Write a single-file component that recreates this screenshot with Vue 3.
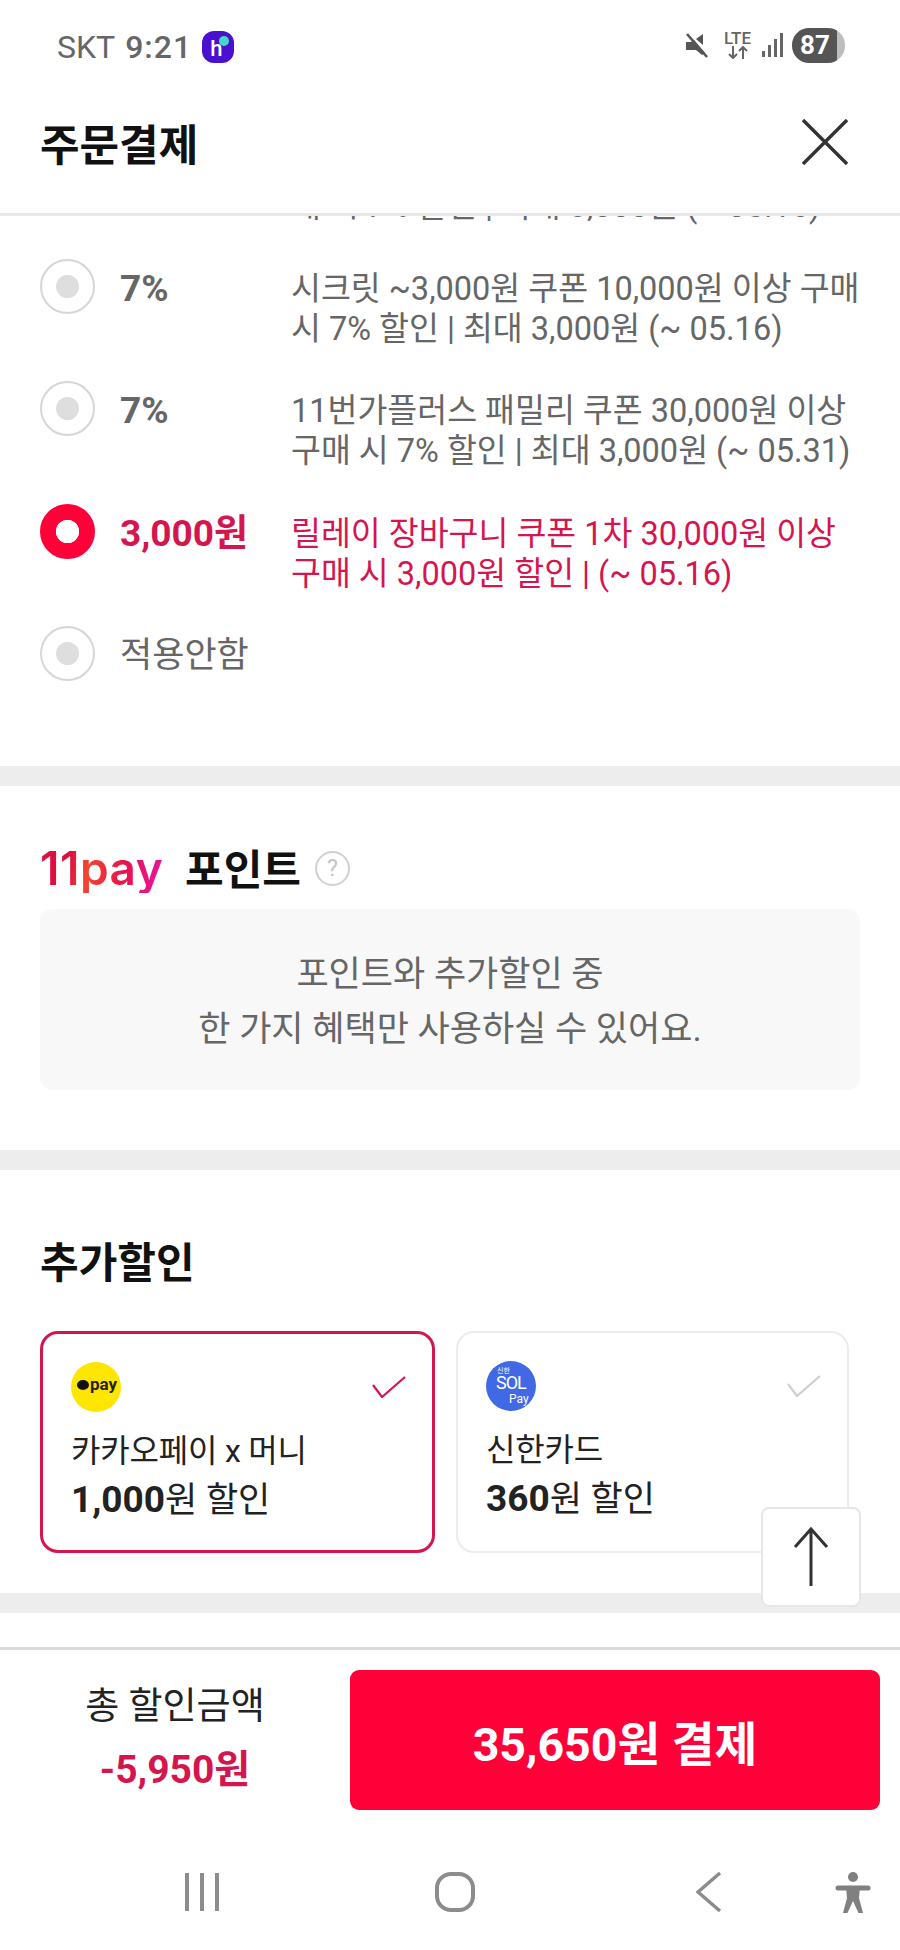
<script setup>
const coupons = [
  { id: 1, amount: '7%', desc: '시크릿 ~3,000원 쿠폰 10,000원 이상 구매 시 7% 할인 | 최대 3,000원 (~ 05.16)', strong: true },
  { id: 2, amount: '7%', desc: '11번가플러스 패밀리 쿠폰 30,000원 이상 구매 시 7% 할인 | 최대 3,000원 (~ 05.31)', strong: true },
  { id: 3, amount: '3,000원', desc: '릴레이 장바구니 쿠폰 1차 30,000원 이상 구매 시 3,000원 할인 | (~ 05.16)', strong: true, active: true },
  { id: 4, amount: '적용안함', desc: '', strong: false },
]
</script>

<template>
  <div class="screen">
    <div class="status">
      <div class="status-left">
        <span>SKT</span>
        <span class="time">9:21</span>
        <span class="happ"><span class="happ-h">h</span><span class="happ-dot"></span></span>
      </div>
      <div class="status-right">
        <svg class="ico-mute" viewBox="0 0 24 26" width="24" height="26">
          <path d="M1 10h5l3-2 11 13-3 2-6-5H1z" fill="#555" />
          <path d="M11 7l7-5v11z" fill="#555" />
          <path d="M2 2l20 23" stroke="#555" stroke-width="2.6" fill="none" />
        </svg>
        <div class="lte">
          <span class="lte-t">LTE</span>
          <svg viewBox="0 0 24 13" width="24" height="13">
            <path d="M7 0v12M3 8l4 4 4-4M17 13V1M13 5l4-4 4 4" stroke="#666" stroke-width="2" fill="none" />
          </svg>
        </div>
        <div class="signal">
          <i style="height: 6px"></i><i style="height: 12px"></i><i style="height: 18px"></i><i style="height: 24px"></i>
        </div>
        <div class="battery"><span>87</span></div>
      </div>
    </div>

    <header class="head">
      <h1>주문결제</h1>
      <svg viewBox="0 0 46 46" width="46" height="46">
        <path d="M1 1l44 44M45 1L1 45" stroke="#333" stroke-width="3.4" fill="none" />
      </svg>
    </header>

    <main class="body">
      <section class="coupons">
        <p class="scrolled">매 시 7% 할인 | 최대 3,000원 (~ 05.16)</p>
        <div v-for="c in coupons" :key="c.id" class="row" :class="{ active: c.active }">
          <span class="radio"><i></i></span>
          <span class="amount" :class="{ strong: c.strong }">{{ c.amount }}</span>
          <span class="desc">{{ c.desc }}</span>
        </div>
      </section>

      <section class="points">
        <div class="title-row">
          <span class="brand">11pay</span>
          <h2>포인트</h2>
          <span class="help">?</span>
        </div>
        <div class="notice">
          <p>포인트와 추가할인 중</p>
          <p>한 가지 혜택만 사용하실 수 있어요.</p>
        </div>
      </section>

      <section class="extra">
        <h2>추가할인</h2>
        <div class="cards">
          <div class="card selected">
            <div class="card-top">
              <span class="logo kakao"><i></i><b>pay</b></span>
              <svg viewBox="0 0 34 22" width="34" height="22">
                <path d="M1 9l9 12L33 1" stroke="#d4164f" stroke-width="2.2" fill="none" />
              </svg>
            </div>
            <p class="name">카카오페이 x 머니</p>
            <p class="off"><b>1,000</b>원 할인</p>
          </div>
          <div class="card">
            <div class="card-top">
              <span class="logo sol"><em>신한</em><b>SOL</b><small>Pay</small></span>
              <svg viewBox="0 0 34 22" width="34" height="22">
                <path d="M1 9l9 12L33 1" stroke="#cfcfcf" stroke-width="2.2" fill="none" />
              </svg>
            </div>
            <p class="name">신한카드</p>
            <p class="off"><b>360</b>원 할인</p>
          </div>
        </div>
      </section>
    </main>

    <footer class="foot">
      <div class="total">
        <p class="total-label">총 할인금액</p>
        <p class="total-value">-5,950원</p>
      </div>
      <div class="pay">35,650원 결제</div>
    </footer>

    <nav class="nav">
      <svg class="n-recent" viewBox="0 0 36 38" width="36" height="38">
        <path d="M3 0v38M18 0v38M33 0v38" stroke="#8c8c8c" stroke-width="4" fill="none" />
      </svg>
      <svg class="n-home" viewBox="0 0 40 40" width="40" height="40">
        <rect x="2" y="2" width="36" height="36" rx="14" stroke="#8c8c8c" stroke-width="4" fill="none" />
      </svg>
      <svg class="n-back" viewBox="0 0 26 40" width="26" height="40">
        <path d="M24 1L2 20l22 19" stroke="#8c8c8c" stroke-width="3.4" fill="none" />
      </svg>
      <svg class="n-a11y" viewBox="0 0 36 42" width="36" height="42">
        <circle cx="18" cy="5" r="5" fill="#808080" />
        <path d="M3 16h30" stroke="#808080" stroke-width="5" stroke-linecap="round" fill="none" />
        <path d="M11 15h14l-1 11 4 15h-4.500L18 29l-5.500 12H8l4-15z" fill="#808080" />
      </svg>
    </nav>

    <button class="to-top" type="button" aria-label="맨 위로">
      <svg viewBox="0 0 36 60" width="36" height="60">
        <path d="M18 59V2M2 20L18 2l16 18" stroke="#333" stroke-width="3" fill="none" />
      </svg>
    </button>
  </div>
</template>

<style>
html, body { margin: 0; background: #fff; }
</style>

<style scoped>
* { box-sizing: border-box; }
p, h1, h2 { margin: 0; }
.screen {
  position: relative;
  width: 900px;
  height: 1950px;
  display: flex;
  flex-direction: column;
  overflow: hidden;
  background: #fff;
  font-family: Roboto, "Noto Sans CJK KR", sans-serif;
  color: #111;
}
.status {
  height: 90px;
  flex: none;
  display: flex;
  justify-content: space-between;
  align-items: flex-start;
  padding: 28px 55px 0 57px;
}
.status-left {
  display: flex;
  align-items: center;
  gap: 10px;
  height: 38px;
  font-size: 32px;
  color: #666;
}
.time { font-weight: 500; letter-spacing: 1px; }
.happ {
  position: relative;
  width: 32px;
  height: 32px;
  margin-left: 0;
  border-radius: 12px;
  background: #4a10d0;
  color: #fff;
  display: block;
}
.happ-h {
  position: absolute;
  left: 8px;
  top: 6px;
  font-size: 22px;
  line-height: 24px;
  font-weight: 500;
}
.happ-dot {
  position: absolute;
  right: 5px;
  top: 5px;
  width: 10px;
  height: 10px;
  border-radius: 50%;
  background: #45d8c8;
}
.status-right {
  display: flex;
  align-items: center;
  height: 38px;
  margin-top: -2px;
}
.ico-mute { margin-right: 14px; }
.lte {
  display: flex;
  flex-direction: column;
  align-items: center;
  width: 29px;
  margin-right: 10px;
}
.lte-t {
  font-size: 17px;
  line-height: 15px;
  font-weight: 500;
  color: #666;
}
.signal {
  display: flex;
  align-items: flex-end;
  gap: 3px;
  height: 24px;
  margin-right: 9px;
}
.signal i {
  display: block;
  width: 3px;
  background: #666;
}
.battery {
  width: 53px;
  height: 35px;
  border-radius: 17px;
  background: linear-gradient(90deg, #555 0 84%, #bdbdbd 84%);
  color: #fff;
  display: flex;
  align-items: center;
  padding-left: 8px;
  font-size: 26px;
  font-weight: 700;
}
.head {
  height: 126px;
  flex: none;
  display: flex;
  justify-content: space-between;
  align-items: center;
  padding: 0 52px 20px 40px;
  border-bottom: 3px solid #e8e8e8;
}
.head h1 {
  font-size: 43px;
  font-weight: 700;
  color: #111;
}
.body {
  flex: 1;
  min-height: 0;
  overflow: hidden;
}
.coupons {
  margin-top: -30px;
  height: 580px;
  display: flex;
  flex-direction: column;
  gap: 32.5px;
  padding-left: 40px;
}
.scrolled {
  padding-left: 251px;
  font-size: 32.5px;
  line-height: 40px;
  height: 40px;
  color: #666;
}
.row {
  display: flex;
  align-items: flex-start;
  min-height: 90px;
  color: #666;
}
.radio {
  width: 55px;
  height: 55px;
  flex: none;
  border-radius: 50%;
  border: 2.5px solid #d6d6d6;
  display: flex;
  align-items: center;
  justify-content: center;
  background: #fff;
}
.radio i {
  display: block;
  width: 23px;
  height: 23px;
  border-radius: 50%;
  background: #dedede;
}
.row.active { color: #d4164f; }
.row.active .radio { border: 16px solid #ff0038; }
.row.active .radio i { background: #fff; }
.amount {
  width: 196px;
  padding-left: 25px;
  flex: none;
  font-size: 35px;
  line-height: 40px;
  margin-top: 10px;
  white-space: nowrap;
}
.amount.strong { font-weight: 700; font-size: 37px; }
.desc {
  width: 570px;
  padding-top: 10px;
  font-size: 32.5px;
  line-height: 40px;
}
.points {
  border-top: 20px solid #ededed;
  border-bottom: 20px solid #ededed;
  padding: 57px 40px 60px;
}
.title-row {
  display: flex;
  align-items: center;
  height: 50px;
  margin-bottom: 16px;
}
.title-row h2 { margin-top: -4px; }
.brand {
  font-family: Inter, sans-serif;
  font-size: 46px;
  font-weight: 600;
  letter-spacing: 0.5px;
  line-height: 50px;
  width: 127px;
  margin-right: 18px;
  background: linear-gradient(100deg, #dc1040 0%, #dc1040 24%, #f4452e 38%, #e6144c 66%, #e8149a 92%);
  -webkit-background-clip: text;
  background-clip: text;
  color: transparent;
}
h2 {
  font-size: 42px;
  font-weight: 700;
  color: #111;
}
.help {
  width: 35px;
  height: 35px;
  margin-left: 14px;
  border-radius: 50%;
  border: 2.5px solid #d0d0d0;
  color: #c4c4c4;
  font-size: 23px;
  display: flex;
  align-items: center;
  justify-content: center;
}
.notice {
  height: 181px;
  padding-top: 6px;
  border-radius: 12px;
  background: #f8f8f8;
  display: flex;
  flex-direction: column;
  align-items: center;
  justify-content: center;
  gap: 15px;
  color: #666;
  font-size: 35px;
  line-height: 40px;
}
.extra {
  border-bottom: 20px solid #ededed;
  padding: 69px 40px 40px;
}
.extra h2 {
  height: 50px;
  line-height: 50px;
  margin-bottom: 42px;
}
.cards {
  display: flex;
  gap: 21px;
}
.card {
  width: 393px;
  height: 222px;
  border-radius: 18px;
  border: 2.5px solid #ececec;
  padding: 28px 26px 0 28px;
}
.card.selected {
  width: 395px;
  border: 3px solid #d4164f;
}
.card-top {
  display: flex;
  justify-content: space-between;
  align-items: center;
  height: 50px;
  margin-bottom: 14px;
}
.logo {
  position: relative;
  width: 50px;
  height: 50px;
  border-radius: 50%;
  display: block;
  flex: none;
}
.kakao {
  background: #ffe600;
  color: #222;
}
.kakao i {
  position: absolute;
  left: 6px;
  top: 18px;
  width: 12px;
  height: 10px;
  border-radius: 50%;
  background: #111;
}
.kakao b {
  position: absolute;
  left: 19px;
  top: 12px;
  font-size: 17px;
  line-height: 20px;
}
.sol {
  background: #4169e6;
  color: #fff;
}
.sol em {
  position: absolute;
  left: 11px;
  top: 6px;
  font-size: 7px;
  line-height: 8px;
  font-style: normal;
}
.sol b {
  position: absolute;
  left: 10px;
  top: 13px;
  font-size: 18px;
  line-height: 18px;
  font-weight: 400;
  letter-spacing: -1px;
}
.sol small {
  position: absolute;
  left: 23px;
  top: 31px;
  font-size: 12px;
  line-height: 14px;
}
.name {
  font-size: 32px;
  letter-spacing: -0.2px;
  line-height: 50px;
  color: #222;
}
.off {
  font-size: 35px;
  line-height: 50px;
  margin-top: -1px;
  color: #222;
}
.off b { font-weight: 700; font-size: 37px; }
.foot {
  height: 163px;
  flex: none;
  border-top: 3px solid #dcdcdc;
  display: flex;
  align-items: flex-start;
  padding: 20px 20px 0 0;
}
.total {
  width: 350px;
  flex: none;
  text-align: center;
}
.total-label {
  font-size: 37px;
  line-height: 44px;
  margin-top: 15px;
  color: #222;
}
.total-value {
  font-size: 39px;
  line-height: 44px;
  margin-top: 19px;
  font-weight: 700;
  color: #d4164f;
}
.pay {
  width: 530px;
  height: 140px;
  border-radius: 9px;
  background: #ff0038;
  color: #fff;
  display: flex;
  align-items: center;
  justify-content: center;
  font-size: 46.5px;
  font-weight: 700;
}
.nav {
  flex: none;
  height: 140px;
  display: flex;
  align-items: flex-start;
  padding: 62px 0 0 184px;
}
.n-recent { flex: none; margin-top: 1px; }
.n-home { flex: none; margin-left: 215px; }
.n-back { flex: none; margin-left: 221px; }
.n-a11y { flex: none; margin-left: 113px; }
.to-top {
  position: absolute;
  left: 761px;
  top: 1507px;
  width: 100px;
  height: 100px;
  padding: 0;
  border: 2.5px solid #e6e6e6;
  border-radius: 8px;
  background: #fff;
  display: flex;
  align-items: center;
  justify-content: center;
}
</style>
